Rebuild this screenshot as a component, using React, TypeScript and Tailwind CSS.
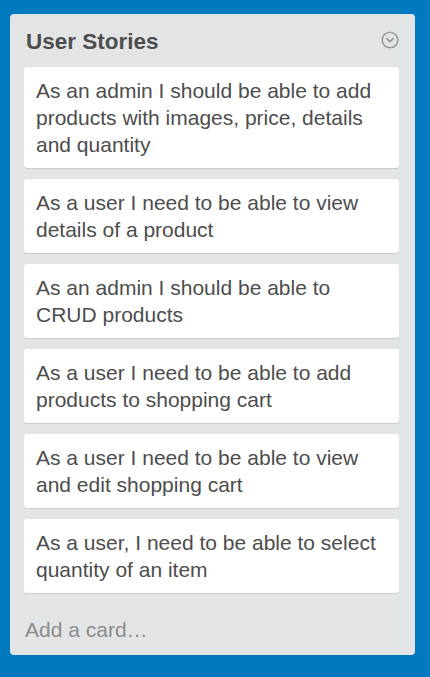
import React from "react";

const cards = [
  "As an admin I should be able to add products with images, price, details and quantity",
  "As a user I need to be able to view details of a product",
  "As an admin I should be able to CRUD products",
  "As a user I need to be able to add products to shopping cart",
  "As a user I need to be able to view and edit shopping cart",
  "As a user, I need to be able to select quantity of an item",
];

export default function App() {
  return (
    <div
      className="w-[430px] h-[677px] bg-[#0079bf] pt-[14px] pl-[10px] overflow-hidden"
      style={{ fontFamily: '"Liberation Sans", Arial, sans-serif' }}
    >
      <div className="w-[405px] bg-[#e2e4e6] rounded-[4px] pl-[14px] pr-[16px] pb-[12px]">
        <div className="flex items-center justify-between h-[53px] pl-[2px]">
          <h2 className="text-[22.5px] font-bold text-[#4d4d4d] leading-6 pt-[2px]">User Stories</h2>
          <svg width="18" height="18" viewBox="0 0 18 18" className="-mt-[2px]">
            <circle cx="9" cy="9" r="7.8" fill="none" stroke="#999" strokeWidth="1.6" />
            <path d="M5.8 7.6 L9 10.6 L12.2 7.6" fill="none" stroke="#999" strokeWidth="1.8" strokeLinecap="round" strokeLinejoin="round" />
          </svg>
        </div>
        <div className="flex flex-col gap-[11px]">
          {cards.map((c) => (
            <div
              key={c}
              className="bg-white rounded-[3px] shadow-[0_1px_0_#ccc] px-[12px] py-[10px] text-[21px] leading-[27px] text-[#4d4d4d]"
            >
              {c}
            </div>
          ))}
        </div>
        <div className="pt-[23px] pl-[1px] text-[21px] leading-[27px] text-[#8c8c8c]">Add a card…</div>
      </div>
    </div>
  );
}
